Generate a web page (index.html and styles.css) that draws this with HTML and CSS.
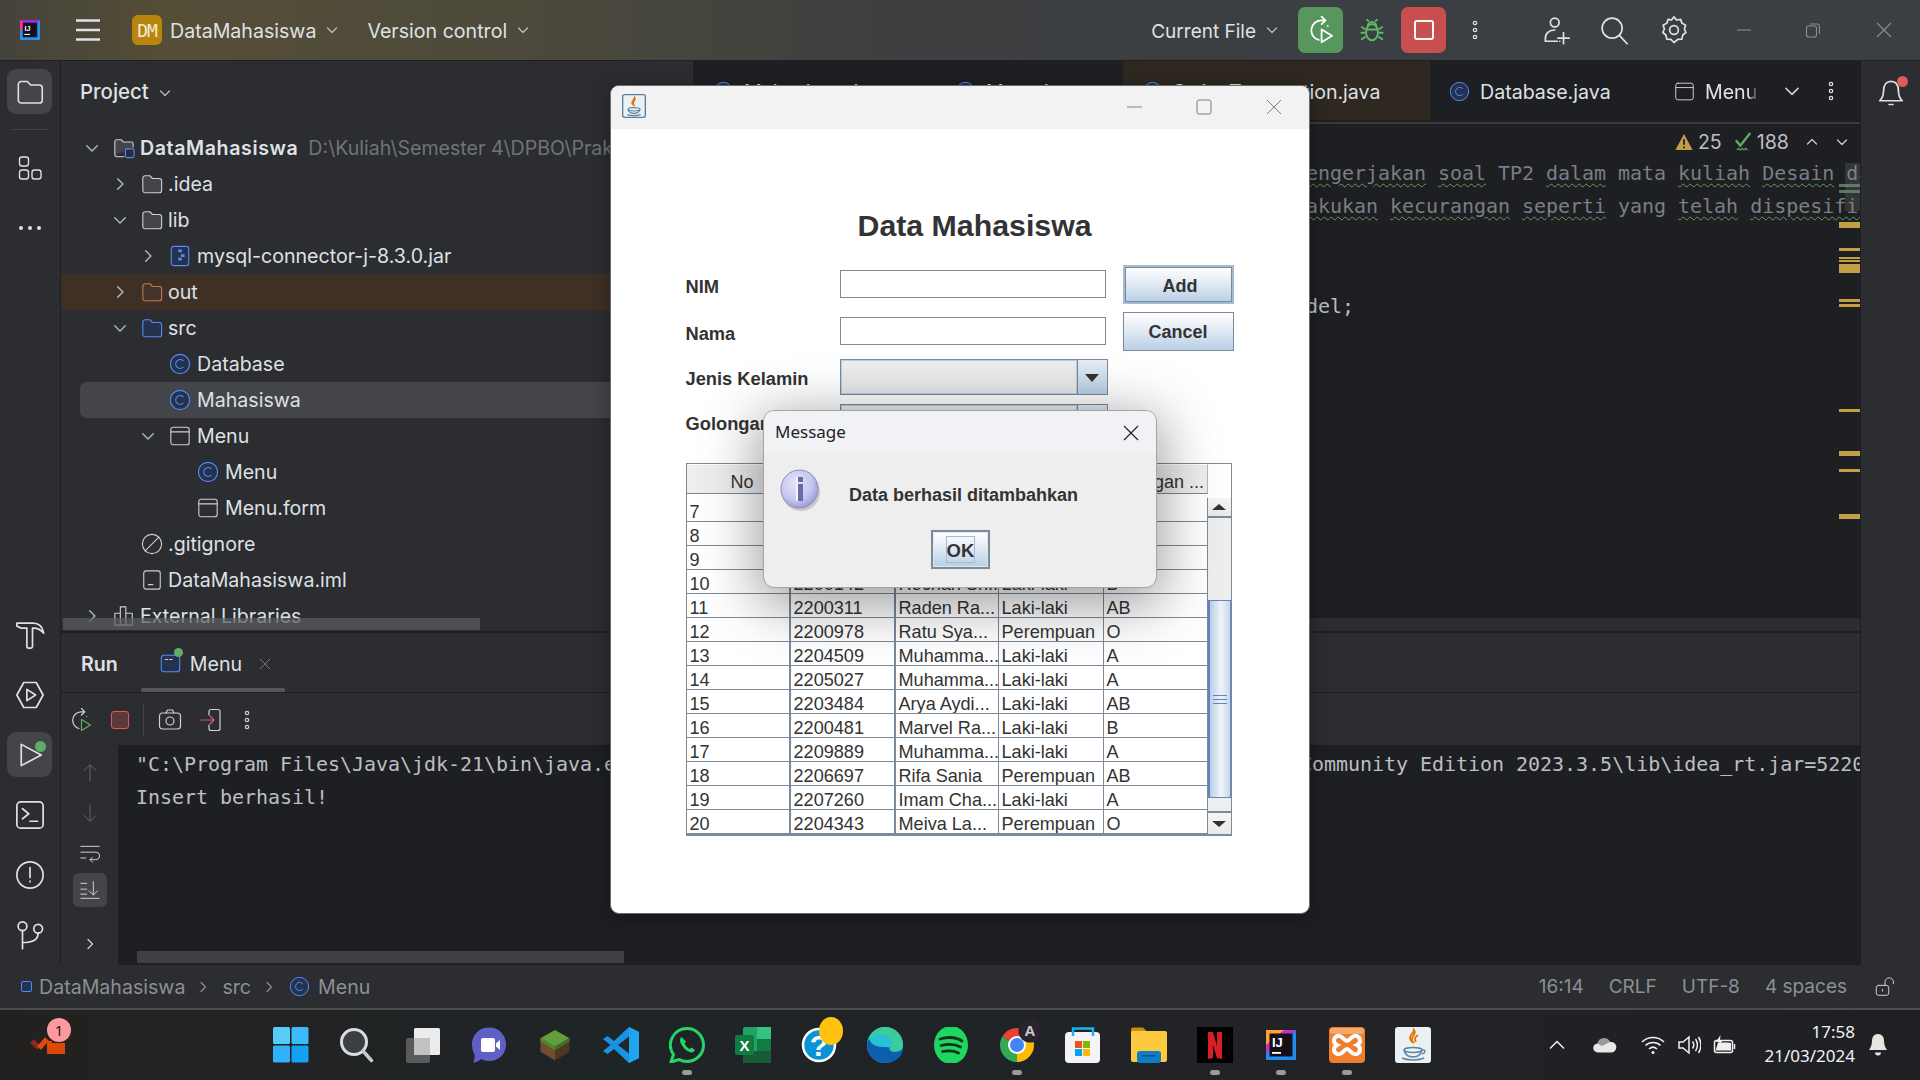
FILE: index.html
```html
<!DOCTYPE html>
<html lang="en">
<head>
<meta charset="utf-8">
<title>DataMahasiswa</title>
<link rel="stylesheet" href="styles.css">
</head>
<body>
<svg class="defs" aria-hidden="true">
  <symbol id="folder" viewBox="0 0 24 24"><path d="M2 5.5A2.5 2.5 0 0 1 4.500 3h5.200l2.800 3H20a2.500 2.500 0 0 1 2.500 2.500V19a2.500 2.500 0 0 1-2.500 2.500H4.500A2.500 2.500 0 0 1 2 19z"/></symbol>
  <symbol id="cls" viewBox="0 0 24 24"><circle cx="12" cy="12" r="10.500"/><path class="thin" d="M15.500 8.500a4.800 4.800 0 1 0 0 7"/></symbol>
  <symbol id="form" viewBox="0 0 24 24"><rect x="2" y="2.500" width="20" height="19" rx="2.500"/><path d="M2 7.500h20"/></symbol>
  <symbol id="chev-r" viewBox="0 0 12 12"><path d="M4 1.500 8.500 6 4 10.500"/></symbol>
  <symbol id="chev-d" viewBox="0 0 12 12"><path d="M1.500 4 6 8.500 10.500 4"/></symbol>
  <symbol id="chev-u" viewBox="0 0 12 12"><path d="M1.500 8 6 3.500 10.500 8"/></symbol>
  <symbol id="dots-v" viewBox="0 0 24 24"><circle class="solid" cx="12" cy="5" r="1.700"/><circle class="solid" cx="12" cy="12" r="1.700"/><circle class="solid" cx="12" cy="19" r="1.700"/></symbol>
  <symbol id="rerun" viewBox="0 0 24 24"><path d="M10 20.500A8.500 8.500 0 0 1 12 3.800h3M12.500 .5 15.800 3.800 12.500 7M17.800 8.500v0"/><path class="play" d="M12.500 11.500 21.500 17 12.500 22.500z"/></symbol>
  <symbol id="x" viewBox="0 0 16 16"><path d="M1.500 1.500 14.500 14.500M14.500 1.500 1.500 14.500"/></symbol>
</svg>

<div class="page">
  <header class="titlebar">
    <div class="tb-left">
      <svg class="logo-s" viewBox="0 0 36 36"><rect width="36" height="36" fill="#2b8ff2"/><path d="M0 0h36L18 18z" fill="#a12cd6"/><path d="M0 0v20L12 12z" fill="#ff318c"/><rect x="5" y="5" width="26" height="26" fill="#14101a"/><text x="8" y="20" class="ij">IJ</text><rect x="8" y="25" width="10" height="2" fill="#fff"/></svg>
      <svg class="burger" viewBox="0 0 24 22"><path d="M0 1.500h24M0 11h24M0 20.500h24"/></svg>
      <span class="badge-dm">DM</span>
      <span class="t-name">DataMahasiswa</span>
      <svg class="ic ch12 m-ch"><use href="#chev-d"/></svg>
      <span class="t-vc">Version control</span>
      <svg class="ic ch12 m-ch"><use href="#chev-d"/></svg>
    </div>
    <div class="tb-right">
      <span class="t-cur">Current File</span>
      <svg class="ic ch12 m-ch2"><use href="#chev-d"/></svg>
      <span class="run-btn green"><svg class="ic s28 w"><use href="#rerun"/></svg></span>
      <svg class="bug" viewBox="0 0 24 24"><ellipse cx="12" cy="14" rx="5.500" ry="7.500"/><path d="M8 8.500a4 4 0 0 1 8 0M9 4 7 2M15 4l2-2M2 9l4 2.500M22 9l-4 2.500M1.500 14.500H6M22.500 14.500H18M2 21l4-3M22 21l-4-3M6.500 11.500h11"/></svg>
      <span class="run-btn red"><span class="stop-in"></span></span>
      <svg class="ic s24 m-dots"><use href="#dots-v"/></svg>
      <svg class="ic s30 m-user" viewBox="0 0 24 24"><circle cx="11" cy="6" r="3.500"/><path d="M3.500 21v-2.500C3.500 14.500 7 12 11 12M15 21h0M3.500 21H13M18 14v9M13.500 18.500h9"/></svg>
      <svg class="ic s30 m-srch" viewBox="0 0 24 24"><circle cx="10.500" cy="10.500" r="8"/><path d="m16.500 16.500 6 6.500"/></svg>
      <svg class="ic s30 m-gear" viewBox="0 0 24 24"><path d="M12 1.500 14 4l3.300-.5 1 3 3 1.700-1 3L21.500 14l-2.500 2-.7 3.300-3.300.2L12 22l-2.500-2.500-3.300-.2-.7-3.300L3 14l1.300-2.800-1-3 3-1.700 1-3L10 4z"/><circle cx="12" cy="12" r="3.500"/></svg>
      <svg class="wc dim m-min" viewBox="0 0 16 16"><path d="M1 8h14"/></svg>
      <svg class="wc dim m-res" viewBox="0 0 16 16"><rect x="1.500" y="4" width="10" height="11" rx="2"/><path d="M5 2h7a2.500 2.500 0 0 1 2.500 2.500V12"/></svg>
      <svg class="wc dim m-cls" viewBox="0 0 16 16"><path d="M1 1l14 14M15 1 1 15"/></svg>
    </div>
  </header>

  <div class="workspace">
    <nav class="strip-left">
      <div class="strip-group">
        <span class="tool active"><svg class="ic s28"><use href="#folder"/></svg></span>
        <span class="strip-sep"></span>
        <span class="tool"><svg class="ic s26" viewBox="0 0 24 24"><rect x="1.500" y="1" width="9" height="9" rx="2.500"/><rect x="1.500" y="14" width="9" height="9" rx="2.500"/><rect x="14" y="14" width="9" height="9" rx="2.500"/></svg></span>
        <span class="tool"><svg class="ic s26" viewBox="0 0 24 24"><circle class="solid" cx="3" cy="12" r="2"/><circle class="solid" cx="12" cy="12" r="2"/><circle class="solid" cx="21" cy="12" r="2"/></svg></span>
      </div>
      <div class="strip-group">
        <span class="tool"><svg class="ic s30" viewBox="0 0 24 24"><path d="M1.500 2.500h13c4.500 0 7.500 3 8.500 8-2.500-2.800-5-4-8-4H14v14.500a1.500 1.500 0 0 1-1.500 1.500h-1.500A1.500 1.500 0 0 1 9.500 21V6.500H5L1.500 5z"/></svg></span>
        <span class="tool"><svg class="ic s30" viewBox="0 0 24 24"><path d="M7 2h10l5.500 10L17 22H7L1.500 12z"/><path d="M9.500 7.500 16.500 12l-7 4.500z"/></svg></span>
        <span class="tool active"><svg class="ic s30" viewBox="0 0 24 24"><path d="M5 3.500 21 12 5 20.500z"/></svg><i class="dot-green big"></i></span>
        <span class="tool"><svg class="ic s30" viewBox="0 0 24 24"><rect x="1.500" y="1.500" width="21" height="21" rx="3"/><path d="M6 7l5 4-5 4M12 17h6"/></svg></span>
        <span class="tool"><svg class="ic s30" viewBox="0 0 24 24"><circle cx="12" cy="12" r="10.500"/><path d="M12 6v8M12 16.800v.5"/></svg></span>
        <span class="tool"><svg class="ic s30" viewBox="0 0 24 24"><circle cx="6" cy="5" r="3.500"/><circle cx="18.500" cy="7" r="3.500"/><path d="M6 8.500V23M6 18c7 0 12.500-2 12.500-7.500"/></svg></span>
      </div>
    </nav>

    <div class="center">
      <div class="top-area">
        <aside class="project">
          <div class="project-head"><span class="project-title">Project</span><svg class="ic ch12 m-ch3"><use href="#chev-d"/></svg></div>
          <div class="tree">
            <div class="row l0"><svg class="ic chev"><use href="#chev-d"/></svg><span class="node"><svg class="ic nd gray" viewBox="0 0 24 24"><path d="M2 20V5a2 2 0 0 1 2-2h5l2.500 2.500H20a2 2 0 0 1 2 2V11M12 21.500H4a2 2 0 0 1-2-1.500"/><rect class="blue-s" x="13.500" y="13" width="9.500" height="9.500" rx="2"/></svg></span><b class="label root">DataMahasiswa</b><span class="path">D:\Kuliah\Semester 4\DPBO\Praktikum\TP2\TP2DPBO2024C2\DataMahasiswa</span></div>
            <div class="row l1"><svg class="ic chev"><use href="#chev-r"/></svg><span class="node"><svg class="ic nd gray"><use href="#folder"/></svg></span><span class="label">.idea</span></div>
            <div class="row l1"><svg class="ic chev"><use href="#chev-d"/></svg><span class="node"><svg class="ic nd gray"><use href="#folder"/></svg></span><span class="label">lib</span></div>
            <div class="row l2"><svg class="ic chev"><use href="#chev-r"/></svg><span class="node"><svg class="ic nd jar" viewBox="0 0 24 24"><rect x="2.500" y="1.500" width="19" height="21" rx="2.500"/><path class="pix" d="M10 5h4v3h-4zM13 10h4v3h-4zM10 14h4v3h-4z"/></svg></span><span class="label">mysql-connector-j-8.3.0.jar</span></div>
            <div class="row l1 excluded"><svg class="ic chev"><use href="#chev-r"/></svg><span class="node"><svg class="ic nd orange"><use href="#folder"/></svg></span><span class="label">out</span></div>
            <div class="row l1"><svg class="ic chev"><use href="#chev-d"/></svg><span class="node"><svg class="ic nd blue"><use href="#folder"/></svg></span><span class="label">src</span></div>
            <div class="row l2"><span class="chev"></span><span class="node"><svg class="ic nd cl"><use href="#cls"/></svg></span><span class="label">Database</span></div>
            <div class="row l2 selected"><span class="chev"></span><span class="node"><svg class="ic nd cl"><use href="#cls"/></svg></span><span class="label">Mahasiswa</span></div>
            <div class="row l2"><svg class="ic chev"><use href="#chev-d"/></svg><span class="node"><svg class="ic nd gray0"><use href="#form"/></svg></span><span class="label">Menu</span></div>
            <div class="row l3"><span class="chev"></span><span class="node"><svg class="ic nd cl"><use href="#cls"/></svg></span><span class="label">Menu</span></div>
            <div class="row l3"><span class="chev"></span><span class="node"><svg class="ic nd gray0"><use href="#form"/></svg></span><span class="label">Menu.form</span></div>
            <div class="row l1"><span class="chev"></span><span class="node"><svg class="ic nd gray0" viewBox="0 0 24 24"><circle cx="12" cy="12" r="10.500"/><path d="M19.500 4.500 4.500 19.500"/></svg></span><span class="label">.gitignore</span></div>
            <div class="row l1"><span class="chev"></span><span class="node"><svg class="ic nd gray0" viewBox="0 0 24 24"><rect x="3" y="2" width="18" height="20" rx="2.500"/><path d="M8 17h5"/></svg></span><span class="label">DataMahasiswa.iml</span></div>
            <div class="row l0"><svg class="ic chev"><use href="#chev-r"/></svg><span class="node"><svg class="ic nd gray0" viewBox="0 0 24 24"><path d="M2 22V9h6v13M8 22V2h6v20M14 22V9h7v13M2 22h19"/></svg></span><span class="label">External Libraries</span></div>
          </div>
          <div class="tree-scroll"></div>
        </aside>

        <section class="editor">
          <div class="tabs">
            <div class="tab-list">
              <span class="tab t-a"><svg class="ic tb-ic cl"><use href="#cls"/></svg>Mahasiswa.java</span>
              <span class="tab t-b"><svg class="ic tb-ic cl"><use href="#cls"/></svg>Menu.java</span>
              <span class="tab t-c tinted"><svg class="ic tb-ic cl"><use href="#cls"/></svg>SwingTransaction.java</span>
              <span class="tab t-d"><svg class="ic tb-ic cl"><use href="#cls"/></svg>Database.java</span>
              <span class="tab last"><svg class="ic tb-ic gray0"><use href="#form"/></svg><span class="fade">Menu.form</span></span>
            </div>
            <svg class="ic ch16 m-t1"><use href="#chev-d"/></svg>
            <svg class="ic s24 m-t2"><use href="#dots-v"/></svg>
          </div>
          <div class="ed-body">
            <div class="insp">
              <svg class="warn" viewBox="0 0 20 20"><path d="M10 1 19.500 19H.5z"/><path class="bang" d="M10 7v6M10 15v2"/></svg>
              <span class="insp-n">25</span>
              <svg class="tick" viewBox="0 0 20 24"><path d="M2 10l5 6L18 2" /><path class="wavy" d="M3 21l2-2 2 2 2-2 2 2 2-2 2 2"/></svg>
              <span class="insp-n">188</span>
              <svg class="ic ch12 m-u"><use href="#chev-u"/></svg>
              <svg class="ic ch12 m-d"><use href="#chev-d"/></svg>
            </div>
            <div class="code c1"><span class="sq">mengerjakan</span> <span class="sq">soal</span> TP2 <span class="sq">dalam</span> mata <span class="sq">kuliah</span> <span class="sq">Desain</span> <span class="sq">dan Pemrograman</span></div>
            <div class="code c2"><span class="sq">melakukan</span> <span class="sq">kecurangan</span> <span class="sq">seperti</span> yang <span class="sq">telah</span> <span class="sq">dispesifikasikan</span></div>
            <div class="code"></div>
            <div class="code"></div>
            <div class="code c3">import javax.swing.table.DefaultTableModel;</div>
            <div class="marks">
              <i class="mk gry" style="top:60px;height:3px"></i><i class="mk gry" style="top:66px;height:3px"></i>
              <i class="mk" style="top:98px;height:6px"></i><i class="mk" style="top:124px;height:3px"></i>
              <i class="mk" style="top:133px;height:2px"></i><i class="mk" style="top:136px;height:2px"></i>
              <i class="mk" style="top:140px;height:9px"></i><i class="mk" style="top:175px;height:3px"></i>
              <i class="mk" style="top:180px;height:3px"></i><i class="mk" style="top:285px;height:3px"></i>
              <i class="mk" style="top:327px;height:5px"></i><i class="mk" style="top:345px;height:3px"></i>
              <i class="mk" style="top:390px;height:5px"></i>
            </div>
            <div class="map-thumb"></div>
          </div>
          <div class="ed-track"></div>
        </section>
      </div>

      <section class="run">
        <div class="run-head">
          <span class="run-title">Run</span>
          <span class="run-tab"><span class="run-ic"><svg class="ic mini" viewBox="0 0 24 24"><rect x="1.500" y="2.500" width="21" height="19" rx="3"/><path class="mini-d" d="M6 7.500h3M11 7.500h3"/></svg><i class="dot-green"></i></span><span>Menu</span><svg class="ic x-mini"><use href="#x"/></svg></span>
        </div>
        <div class="run-tools">
          <svg class="ic s24 greyplay"><use href="#rerun"/></svg>
          <span class="sq-stop"></span>
          <span class="tool-sep"></span>
          <svg class="ic s24" viewBox="0 0 24 24"><rect x="1.500" y="5" width="21" height="16" rx="3"/><circle cx="12" cy="13" r="4"/><path d="M8 5l1.500-3h5L16 5"/></svg>
          <svg class="ic s24" viewBox="0 0 24 24"><path d="M9 7V3.500a2 2 0 0 1 2-2h7a2 2 0 0 1 2 2v17a2 2 0 0 1-2 2h-7a2 2 0 0 1-2-2V17"/><path class="red-s" d="M1 12h13M10 8l4 4-4 4"/></svg>
          <svg class="ic s24"><use href="#dots-v"/></svg>
        </div>
        <div class="run-main">
          <div class="gutter">
            <svg class="ic g-ic dimmer" viewBox="0 0 24 24"><path d="M12 22V2M5 9l7-7 7 7"/></svg>
            <svg class="ic g-ic dimmer" viewBox="0 0 24 24"><path d="M12 2v20M5 15l7 7 7-7"/></svg>
            <svg class="ic g-ic" viewBox="0 0 24 24"><path d="M1 4h22M1 11h18a3.500 3.500 0 0 1 0 9h-7M15 17l-3 3 3 3M1 18h6"/></svg>
            <span class="g-on"><svg class="ic g-ic" viewBox="0 0 24 24"><path d="M1 4h7M1 11h7M1 17h7M1 22h22M16 2v16M11 13l5 5 5-5"/></svg></span>
            <svg class="ic ch12 g-ch"><use href="#chev-r"/></svg>
          </div>
          <div class="console">
            <div class="con-line">"C:\Program Files\Java\jdk-21\bin\java.exe" "-javaagent:C:\Program Files\JetBrains\IntelliJ IDEA Community Edition 2023.3.5\lib\idea_rt.jar=52200:C:\Program Files</div>
            <div class="con-line">Insert berhasil!</div>
            <div class="con-scroll"></div>
          </div>
        </div>
      </section>
    </div>

    <nav class="strip-right">
      <span class="bell-wrap"><svg class="ic s30" viewBox="0 0 24 24"><path d="M3 19c1.500-1.500 3-3 3-7.500C6 6 8.500 3.500 12 3.500s6 2.500 6 8c0 4.500 1.500 6 3 7.500zM10.500 22h3"/></svg><i class="bell-dot"></i></span>
    </nav>
  </div>

  <footer class="status">
    <div class="crumbs">
      <span class="mod-sq"></span><span>DataMahasiswa</span>
      <svg class="ic ch12"><use href="#chev-r"/></svg>
      <span>src</span>
      <svg class="ic ch12"><use href="#chev-r"/></svg>
      <svg class="ic tb-ic cl"><use href="#cls"/></svg>
      <span class="crumb-end">Menu</span>
    </div>
    <div class="st-right">
      <span>16:14</span><span>CRLF</span><span>UTF-8</span><span>4 spaces</span>
      <svg class="ic lock" viewBox="0 0 24 24"><rect x="1.500" y="10" width="15" height="12" rx="3"/><path d="M12 10V6a5 5 0 0 1 10 0v2M9 15v2"/></svg>
    </div>
  </footer>

  <div class="taskbar">
    <div class="widget">
      <svg class="w-ic" viewBox="0 0 36 22"><path class="w-check" d="M2 8l7 7"/><path class="w-check2" d="M9 15l8-9"/><rect x="17" y="10" width="18" height="11" fill="#dc4a0a"/><path d="M17 8h5v4h-5z" fill="#dc4a0a"/></svg>
      <span class="w-badge">1</span>
    </div>
    <div class="apps">
      <span class="app"><svg viewBox="0 0 36 36"><rect width="17" height="17" rx="1.500" fill="#56cdf9"/><rect x="18.500" width="17" height="17" rx="1.500" fill="#3bbcf8"/><rect y="18.500" width="17" height="17" rx="1.500" fill="#2fb2f8"/><rect x="18.500" y="18.500" width="17" height="17" rx="1.500" fill="#14a0f5"/></svg></span>
      <span class="app"><svg viewBox="0 0 36 36"><circle cx="15" cy="15" r="12.500" fill="#3b3f43" stroke="#dcdcdc" stroke-width="3"/><path d="M24 24l8.500 9.500" stroke="#c9c9c9" stroke-width="3.500" stroke-linecap="round"/></svg></span>
      <span class="app"><svg viewBox="0 0 36 36"><rect x="1" y="11" width="24" height="25" rx="2" fill="#5a5a5a"/><rect x="9" y="1" width="26" height="27" rx="1.500" fill="#ececec"/><rect x="9" y="11" width="16" height="17" fill="#c2c2c2"/></svg></span>
      <span class="app"><svg viewBox="0 0 36 36"><path d="M18 .5C28 .5 35 8 35 17.500S28 34 18 34c-3 0-6-.8-8-2-2 2-5 3.500-8 3.500 1.500-3 2-5 1.500-8C2 25 1 21 1 17.500 1 8 8 .5 18 .5z" fill="#6060c4"/><rect x="10" y="11" width="14" height="14" rx="2" fill="#fff"/><path d="M25 16.500 29 13v10l-4-3.500z" fill="#fff"/></svg></span>
      <span class="app"><svg viewBox="-3 0 42 36"><path d="M18 .5 35 10 18 20 1 10z" fill="#629f3c"/><path d="M1 10 18 20v16L1 26z" fill="#6d4c30"/><path d="M35 10 18 20v16l17-10z" fill="#4f3622"/><path d="M1 10 18 20v4L1 14z" fill="#4f8a2f"/><path d="M35 10 18 20v4l17-10z" fill="#3f7325"/></svg></span>
      <span class="app"><svg viewBox="0 0 36 36"><path d="M26 0 36 5v26l-10 5-15-14-6.500 5L0 24l7.500-6L0 12l4.500-3 6.500 5z" fill="#1793e4"/><path d="M26 9.500 15 18l11 8.500z" fill="#23262a"/><path d="M26 0 36 5v26l-10 5z" fill="#20a4f0"/></svg></span>
      <span class="app"><svg viewBox="0 0 36 36"><path d="M18 1.500A16.500 16.500 0 0 1 18 34.500c-3 0-5.500-.7-8-2L2 35l2.500-7.500A16.500 16.500 0 0 1 18 1.500z" fill="none" stroke="#25d366" stroke-width="3"/><path d="M12.500 10c-1.500 1-2 3-1 5.500 1.500 4 5 8 9 9.500 2.500 1 4.500 0 5.500-2l-3.500-2.500-2 1.500c-2-1-4-3.500-5-5.500l1.500-2z" fill="#25d366"/></svg></span>
      <span class="app"><svg viewBox="0 0 36 36"><rect x="8" y="0" width="28" height="36" rx="2" fill="#21a366"/><rect x="22" y="0" width="14" height="12" fill="#33c481"/><rect x="22" y="12" width="14" height="12" fill="#107c41"/><rect x="8" y="24" width="28" height="12" fill="#185c37"/><rect y="8" width="19" height="20" rx="2" fill="#107c41"/><text x="9.500" y="24" class="sv-x">X</text></svg></span>
      <span class="app"><svg class="ovf" viewBox="0 0 36 36"><circle cx="18" cy="18" r="16" fill="#0a94d6" stroke="#fff" stroke-width="2.500"/><text x="18" y="29" class="sv-q">?</text><ellipse cx="30" cy="4" rx="12" ry="14" fill="#ffc20e"/></svg></span>
      <span class="app"><svg viewBox="0 0 36 36"><circle cx="18" cy="18" r="18" fill="#28c0d6"/><path d="M36 20c0 10-8 16-18 16C8 36 0 28 0 18c0-3 1-6 2-8 0 6 6 10 14 10 7 0 12 2 15 4 3 0 5-2 5-4z" fill="#0c5fb0"/><path d="M18 0c10 0 18 8 18 18 0 4-4 7-8 7-3 0-5-1-6-3 2-1 3-3 3-5 0-5-5-10-11-10-6 0-11 3-14 8C3 6 10 0 18 0z" fill="#3ccc9c"/></svg></span>
      <span class="app"><svg viewBox="0 0 36 36"><ellipse cx="18" cy="18" rx="17" ry="19" fill="#1ed760"/><path d="M7 12c7-2 16-2 22 2M8 18.500c6-1.500 14-1.500 19.500 1.500M9.500 24.500c5-1 11.500-1 16 1.500" fill="none" stroke="#15301f" stroke-width="2.800" stroke-linecap="round"/></svg></span>
      <span class="app"><svg class="ovf" viewBox="0 0 36 36"><path d="M18 18 3.300 9.500A17 17 0 0 1 32.700 9.500z" fill="#ea4335"/><path d="M18 18 32.700 9.500A17 17 0 0 1 18 35z" fill="#fbbc04"/><path d="M18 18 18 35A17 17 0 0 1 3.300 9.500z" fill="#34a853"/><circle cx="18" cy="18" r="9" fill="#fff"/><circle cx="18" cy="18" r="7" fill="#4285f4"/><circle cx="31" cy="4" r="11.500" fill="#2a2330"/><text x="31" y="9" class="sv-a">A</text></svg></span>
      <span class="app"><svg viewBox="0 0 36 36"><rect y="5" width="35" height="31" rx="4" fill="#f4f4f4"/><path d="M8 9V1.500h20V9" fill="none" stroke="#1ab2f5" stroke-width="2.500"/><rect x="10" y="14" width="7" height="7" fill="#f25022"/><rect x="18" y="14" width="7" height="7" fill="#7fba00"/><rect x="10" y="22" width="7" height="7" fill="#00a4ef"/><rect x="18" y="22" width="7" height="7" fill="#ffb900"/></svg></span>
      <span class="app"><svg viewBox="0 0 36 36"><path d="M0 2.500A2 2 0 0 1 2 .5h10l5 5h-17z" fill="#c8900f"/><rect y="4" width="36" height="31" rx="2" fill="#fdc93e"/><rect x="6" y="24" width="24" height="12" rx="3" fill="#0f7dc6"/><rect x="11" y="28" width="14" height="1.500" fill="#0b4f80"/></svg></span>
      <span class="app"><svg viewBox="0 0 36 36"><rect width="36" height="36" fill="#000"/><path d="M11 5h5l4 14V5h5v27l-5-1-4-13v13l-5 1z" fill="#d81f26"/></svg></span>
      <span class="app"><svg viewBox="0 0 36 36"><rect x="3" y="3" width="30" height="30" fill="#1f8cf0"/><path d="M3 3h30L18 18 3 26z" fill="#c232c8"/><path d="M3 3h18L3 18z" fill="#ffa234"/><rect x="6.500" y="6.500" width="23" height="23" fill="#14101a"/><text x="9" y="20" class="ij">IJ</text><rect x="9" y="25" width="9" height="1.800" fill="#fff"/></svg></span>
      <span class="app"><svg viewBox="0 0 36 36"><rect width="36" height="36" rx="4" fill="#ee7f2c"/><rect x="1" y="1" width="34" height="6" rx="3" fill="#f7a869"/><path d="M8 9c5-2 7 5 10 5s5-7 10-5c4 2 4 7 0 9 4 2 4 7 0 9-5 2-7-5-10-5s-5 7-10 5c-4-2-4-7 0-9-4-2-4-7 0-9z" fill="none" stroke="#fff" stroke-width="4"/></svg></span>
      <span class="app"><svg viewBox="0 0 36 36"><rect width="36" height="36" rx="3" fill="#eaf0f4"/><path d="M19 3c3 4-3 6-2 10 .4 2 2 3 2 3-4-2-5-5-3-8 1-2 3-3 3-5zM23 8c-3 2-4 4-2 7" fill="none" stroke="#e76f00" stroke-width="1.800"/><ellipse cx="18" cy="23" rx="9" ry="2.500" fill="none" stroke="#5f84a0" stroke-width="1.500"/><path d="M9 23c1 4 4 7 9 7s8-3 9-7M7 31c5 2.500 17 2.500 22 0" fill="none" stroke="#5f84a0" stroke-width="1.500"/><path d="M27 23c4-1 4 3 0 4" fill="none" stroke="#5f84a0" stroke-width="1.300"/></svg></span>
    </div>
    <div class="tray">
      <svg class="t-ic caret" viewBox="0 0 16 10"><path d="M1 8.500 8 1.500l7 7"/></svg>
      <svg class="t-cloud" viewBox="0 0 26 16"><path d="M6 15.500a4.500 4.500 0 0 1-.5-9A7 7 0 0 1 18 5a5.300 5.300 0 0 1 2 10.500z" fill="#e8e8e8"/><path d="M12 1a6.500 6.500 0 0 1 6 4l-8 4-4.500-2.500A7 7 0 0 1 12 1z" fill="#9a9a9a"/></svg>
      <span class="spc"></span>
      <svg class="t-ic t36" viewBox="0 0 24 20"><path d="M1 7C7 1 17 1 23 7M4.500 10.500c4-4 11-4 15 0M8 14c2.500-2.300 5.500-2.300 8 0"/><circle class="solid-w" cx="12" cy="17.500" r="1.500"/></svg>
      <svg class="t-ic t36" viewBox="0 0 24 20"><path d="M2 7v6h4l6 5V2L6 7zM15.500 6.500c1.500 2 1.500 5 0 7M18.500 4c2.500 3.500 2.500 8.500 0 12M21.500 2c3 5 3 11 0 16"/></svg>
      <svg class="t-ic t36" viewBox="0 0 24 20"><rect x="1.500" y="5.500" width="18" height="12" rx="2"/><path class="b-f" d="M5 7.500h10l3 .5v7.500H2.500z"/><path d="M21.500 9v5"/><path class="b-f" d="M7.500 0 3 7h3.500L4.500 12 10 5H7z"/></svg>
      <div class="clock"><span>17:58</span><span>21/03/2024</span></div>
      <span class="t-bell"><svg viewBox="0 0 20 24"><path d="M10 1c-4 0-6 3-6 7 0 4-1.500 7-3 9h18c-1.500-2-3-5-3-9 0-4-2-7-6-7zM7 19.500h6a3 3 0 0 1-6 0z" fill="#e6e6e1"/></svg></span>
    </div>
  </div>

  <!-- Java application window -->
  <div class="jframe">
    <div class="jtitle">
      <svg class="jicon" viewBox="0 0 36 36"><rect x="1" y="1" width="34" height="34" rx="3" fill="#eaf0f4" stroke="#5a7f9f" stroke-width="2"/><path d="M19 5c3 4-3 6-2 10 .4 2 2 3 2 3-4-2-5-5-3-8 1-2 3-3 3-5z" fill="none" stroke="#e76f00" stroke-width="2"/><ellipse cx="18" cy="23" rx="9" ry="2.500" fill="none" stroke="#5f84a0" stroke-width="1.800"/><path d="M9 23c1 4 4 6 9 6s8-2 9-6M8 31c5 2 15 2 20 0" fill="none" stroke="#5f84a0" stroke-width="1.800"/></svg>
      <svg class="j-wc j-min" viewBox="0 0 16 16"><path d="M0 8h16"/></svg>
      <svg class="j-wc j-max" viewBox="0 0 16 16"><rect x="1" y="1" width="14" height="14" rx="2"/></svg>
      <svg class="j-wc j-cls" viewBox="0 0 16 16"><path d="M1 1l14 14M15 1 1 15"/></svg>
    </div>
    <div class="jbody">
      <h1 class="jhead">Data Mahasiswa</h1>
      <div class="jform">
        <label class="jlabel">NIM</label><span class="jinput"></span><button class="jbtn focus">Add</button>
        <label class="jlabel">Nama</label><span class="jinput"></span><button class="jbtn">Cancel</button>
        <label class="jlabel">Jenis Kelamin</label><span class="jcombo"><span class="jc-in"></span><span class="jc-arrow"></span></span><span></span>
        <label class="jlabel">Golongan Darah</label><span class="jcombo"><span class="jc-in"></span><span class="jc-arrow"></span></span><span></span>
      </div>
      <div class="jtable">
        <div class="jtable-main">
          <div class="jhdr"><span>No</span><span>NIM</span><span>Nama</span><span>Jenis Kelamin</span><span>Golongan ...</span></div>
          <table class="jgrid">
            <colgroup><col class="c-1"><col class="c-2"><col class="c-3"><col class="c-4"><col class="c-5"></colgroup>
            <tbody>
              <tr><td>7</td><td>2202046</td><td>Muhamma...</td><td>Laki-laki</td><td>A</td></tr>
              <tr><td>8</td><td>2201440</td><td>Fadhil Mu...</td><td>Laki-laki</td><td>B</td></tr>
              <tr><td>9</td><td>2203903</td><td>Hanif Ahm...</td><td>Laki-laki</td><td>O</td></tr>
              <tr><td>10</td><td>2200142</td><td>Rochan Sh...</td><td>Laki-laki</td><td>B</td></tr>
              <tr><td>11</td><td>2200311</td><td>Raden Ra...</td><td>Laki-laki</td><td>AB</td></tr>
              <tr><td>12</td><td>2200978</td><td>Ratu Sya...</td><td>Perempuan</td><td>O</td></tr>
              <tr><td>13</td><td>2204509</td><td>Muhamma...</td><td>Laki-laki</td><td>A</td></tr>
              <tr><td>14</td><td>2205027</td><td>Muhamma...</td><td>Laki-laki</td><td>A</td></tr>
              <tr><td>15</td><td>2203484</td><td>Arya Aydi...</td><td>Laki-laki</td><td>AB</td></tr>
              <tr><td>16</td><td>2200481</td><td>Marvel Ra...</td><td>Laki-laki</td><td>B</td></tr>
              <tr><td>17</td><td>2209889</td><td>Muhamma...</td><td>Laki-laki</td><td>A</td></tr>
              <tr><td>18</td><td>2206697</td><td>Rifa Sania</td><td>Perempuan</td><td>AB</td></tr>
              <tr><td>19</td><td>2207260</td><td>Imam Cha...</td><td>Laki-laki</td><td>A</td></tr>
              <tr><td>20</td><td>2204343</td><td>Meiva La...</td><td>Perempuan</td><td>O</td></tr>
            </tbody>
          </table>
        </div>
        <div class="jsb">
          <span class="jsb-btn up"><i class="tri-up"></i></span>
          <span class="jsb-gap"></span>
          <span class="jsb-thumb"><i></i></span>
          <span class="jsb-rest"></span>
          <span class="jsb-btn down"><i class="tri-down"></i></span>
        </div>
      </div>
    </div>
  </div>

  <!-- Message dialog -->
  <div class="msg">
    <div class="msg-title"><span>Message</span><svg class="msg-x" viewBox="0 0 16 16"><path d="M1 1l14 14M15 1 1 15"/></svg></div>
    <div class="msg-body">
      <div class="msg-row">
        <svg class="msg-ic" viewBox="0 0 40 44"><defs><radialGradient id="ig" cx="40%" cy="35%" r="75%"><stop offset="0" stop-color="#e6e6fb"/><stop offset=".6" stop-color="#c4c4f0"/><stop offset="1" stop-color="#8d8dc8"/></radialGradient></defs><ellipse cx="21" cy="23" rx="19" ry="19" fill="#9a9a9a" opacity=".45"/><ellipse cx="19.500" cy="20" rx="18.500" ry="19" fill="url(#ig)" stroke="#8c8cc0"/><rect x="16" y="8" width="7" height="5" fill="#f4f4ff"/><rect x="16" y="15" width="7" height="17" fill="#f4f4ff"/><rect x="18" y="15" width="5" height="17" fill="#6a6aa6"/><rect x="18" y="8" width="5" height="5" fill="#6a6aa6"/></svg>
        <span class="msg-text">Data berhasil ditambahkan</span>
      </div>
      <button class="msg-ok"><span>OK</span></button>
    </div>
  </div>
</div>
</body>
</html>
```

FILE: styles.css
```css
* { box-sizing: border-box; }
html, body { margin: 0; padding: 0; background: #1e1f22; }
body { font-family: "Inter", "Noto Sans", sans-serif; font-size: 19.6px; color: #dfe1e5; }
.defs { position: absolute; width: 0; height: 0; }

.page { position: relative; width: 1920px; height: 1080px; overflow: hidden; display: flex; flex-direction: column; }

/* icons */
.ic { fill: none; stroke: currentColor; stroke-width: 1.2; stroke-linecap: round; stroke-linejoin: round; color: #ced0d6; flex: none; overflow: visible; }
.ic .solid { fill: currentColor; stroke: none; }
.s24 { width: 24px; height: 24px; }
.s26 { width: 24px; height: 24px; }
.s28 { width: 28px; height: 28px; }
.s30 { width: 30px; height: 30px; }
.ch12 { width: 12px; height: 12px; }
.ch16 { width: 16px; height: 16px; }
.play { stroke: var(--play, currentColor); }
.tool .ic, .tb-right .s30, .strip-right .ic { stroke-width: 1.35; color: #dfe1e5; }

/* title bar */
.titlebar { height: 61px; flex: none; display: flex; justify-content: space-between; align-items: center; border-bottom: 1px solid #1e1f22; background: linear-gradient(90deg, #44433b 0, #554e37 170px, #4d4a3b 500px, #3d3f40 900px, #3b3e42 1300px); }
.tb-left, .tb-right { display: flex; align-items: center; height: 60px; }
.tb-left { padding-left: 20px; }
.logo-s { width: 20px; height: 20px; flex: none; }
.ij { font-family: "Liberation Sans", sans-serif; font-weight: 700; font-size: 13px; fill: #fff; }
.burger { width: 24px; height: 22px; margin-left: 36px; flex: none; fill: none; stroke: #dfe1e5; stroke-width: 2.4; }
.badge-dm { width: 30px; height: 30px; margin-left: 32px; border-radius: 6px; background: #b8860f; color: #f5ecd0; font-family: "DejaVu Sans Mono", monospace; font-size: 18px; display: flex; align-items: center; justify-content: center; letter-spacing: -1px; }
.t-name { margin-left: 8px; padding-top: 2px; }
.m-ch { margin-left: 10px; color: #bcbec4; }
.t-vc { margin-left: 29px; padding-top: 2px; }
.t-cur { margin-right: 10px; padding-top: 2px; font-size: 19px; }
.m-ch2 { color: #bcbec4; margin-right: 20px; }
.run-btn { width: 45px; height: 46px; border-radius: 7px; display: flex; align-items: center; justify-content: center; flex: none; }
.green { background: #57965c; }
.w { color: #fff; stroke-width: 1.5; }
.bug { width: 26px; height: 26px; margin: 0 16px; fill: none; stroke: #5fb865; stroke-width: 1.7; flex: none; }
.red { background: #c94f4f; }
.stop-in { width: 20px; height: 20px; border: 2px solid #fff; border-radius: 3px; }
.m-dots { margin-left: 17px; color: #dfe1e5; }
.m-user { margin-left: 54px; }
.m-srch { margin-left: 28px; }
.m-gear { margin-left: 30px; }
.wc { width: 16px; height: 16px; fill: none; stroke: #8b8e92; stroke-width: 1.1; flex: none; }
.m-min { margin-left: 47px; }
.m-res { margin-left: 53px; }
.m-cls { margin-left: 55px; margin-right: 28px; }

/* workspace */
.workspace { flex: 1; display: flex; min-height: 0; }
.strip-left { width: 61px; flex: none; background: #2b2d30; border-right: 1px solid #1e1f22; display: flex; flex-direction: column; justify-content: space-between; padding: 8px 0 8px 7px; }
.strip-group { display: flex; flex-direction: column; gap: 15px; }
.tool { position: relative; width: 45px; height: 45px; border-radius: 9px; display: flex; align-items: center; justify-content: center; }
.tool.active { background: #43454a; }
.strip-sep { display: block; width: 36px; height: 1px; background: #43454a; margin: 0 0 0 5px; }
.dot-green { position: absolute; width: 9px; height: 9px; border-radius: 50%; background: #5fad65; }
.dot-green.big { width: 11px; height: 11px; top: 9px; right: 6px; }

.center { flex: 1; min-width: 0; display: flex; flex-direction: column; }
.top-area { height: 570px; flex: none; display: flex; }

/* project tree */
.project { width: 632px; flex: none; background: #2b2d30; position: relative; overflow: hidden; }
.project-head { height: 69px; padding: 19px 0 0 19px; display: flex; align-items: flex-start; }
.project-title { font-weight: 500; font-size: 20.4px; line-height: 24px; }
.m-ch3 { margin: 7px 0 0 10px; color: #bcbec4; }
.tree { display: flex; flex-direction: column; }
.row { height: 36px; flex: none; display: flex; align-items: center; white-space: nowrap; }
.l0 { padding-left: 21px; }
.l1 { padding-left: 49px; }
.l2 { padding-left: 77px; }
.l3 { padding-left: 105px; }
.chev { width: 20px; height: 14px; flex: none; color: #b4b8bf; }
.node { margin-left: 11px; width: 21px; height: 24px; margin-right: 7px; display: flex; align-items: center; justify-content: center; flex: none; }
.l0 .node, .l1 .node { margin-right: 6px; }
.nd { width: 22px; height: 22px; stroke-width: 1.2; }
.gray { color: #ced0d6; fill: #43454a; }
.gray0 { color: #ced0d6; }
.orange { color: #c8754f; fill: #45322b; }
.blue { color: #548af7; fill: #25324d; }
.cl { color: #548af7; fill: #25324d; }
.cl .thin { fill: none; }
.jar { color: #548af7; fill: #25324d; }
.pix { fill: #548af7; stroke: none; }
.blue-s { stroke: #548af7; fill: #2b2d30; }
.label { color: #dfe1e5; }
.root { font-weight: 600; letter-spacing: .6px; }
.path { color: #6f737a; margin-left: 10px; }
.excluded { background: #3f3025; }
.selected { background: #43454a; border-radius: 7px 0 0 7px; margin-left: 19px; padding-left: 58px; }
.tree-scroll { position: absolute; left: 2px; top: 557px; width: 417px; height: 12px; background: rgba(92, 93, 97, .72); }

/* editor */
.editor { flex: 1; min-width: 0; background: #1e1f22; display: flex; flex-direction: column; }
.tabs { height: 63px; flex: none; display: flex; align-items: center; border-bottom: 2px solid #393b40; padding-bottom: 2px; }
.tab-list { width: 1072px; height: 100%; display: flex; align-items: center; overflow: hidden; }
.tab { flex: none; height: 100%; padding: 2px 0 0 20px; display: flex; align-items: center; white-space: nowrap; color: #dfe1e5; }
.t-a { width: 242px; }
.t-b { width: 188px; }
.t-c { width: 307px; padding-left: 19px; }
.t-d { width: 225px; padding-left: 19px; }
.tab.tinted { background: #2e2821; }
.tab.last { padding-left: 19px; }
.tb-ic { width: 21px; height: 21px; margin-right: 10px; stroke-width: 1.1; }
.fade { width: 54px; overflow: hidden; -webkit-mask-image: linear-gradient(90deg, #000 80%, transparent); mask-image: linear-gradient(90deg, #000 80%, transparent); }
.m-t1 { margin-left: 19px; }
.m-t2 { margin-left: 19px; color: #dfe1e5; }
.ed-body { flex: 1; position: relative; overflow: hidden; min-height: 0; }
.insp { height: 33px; padding-top: 2px; display: flex; align-items: center; justify-content: flex-end; padding-right: 12px; color: #bcbec4; }
.warn { width: 18px; height: 18px; fill: #c29e4a; stroke: none; flex: none; }
.warn .bang { stroke: #1e1f22; stroke-width: 2; fill: none; }
.insp-n { margin-left: 5px; }
.tick { width: 18px; height: 24px; margin-left: 12px; fill: none; stroke: #5fad65; stroke-width: 2.6; flex: none; }
.tick .wavy { stroke-width: 1.2; }
.m-u { margin-left: 17px; }
.m-d { margin-left: 18px; }
.code { height: 33px; line-height: 33px; font-family: "DejaVu Sans Mono", monospace; font-size: 20px; letter-spacing: -.04px; color: #7a7e85; white-space: nowrap; overflow: hidden; }
.c1 { padding-left: 601px; }
.c2 { padding-left: 577px; }
.c3 { padding-left: 145px; margin-top: 1px; color: #bcbec4; }
.sq { text-decoration: underline wavy #5d9e5d 1px; text-underline-offset: 3px; }
.marks { position: absolute; right: 0; top: 0; width: 21px; height: 100%; }
.mk { position: absolute; left: 0; width: 100%; background: #c29e45; }
.mk.gry { background: #577865; }
.map-thumb { position: absolute; right: 0; top: 39px; width: 15px; height: 48px; background: rgba(130, 130, 130, .22); }
.ed-track { height: 13px; flex: none; background: #2b2d30; }

/* run panel */
.run { flex: 1; display: flex; flex-direction: column; min-height: 0; border-top: 2px solid #1e1f22; background: #2b2d30; }
.run-head { height: 60px; flex: none; display: flex; align-items: stretch; border-bottom: 1px solid #1e1f22; padding-left: 20px; }
.run-title { font-weight: 600; align-self: center; margin-top: 2px; }
.run-tab { position: relative; margin-left: 23px; width: 144px; padding: 2px 0 0 19px; display: flex; align-items: center; }
.run-tab::after { content: ""; position: absolute; left: 0; right: 0; bottom: 0; height: 4px; background: #55575c; border-radius: 2px 2px 0 0; }
.run-ic { position: relative; display: flex; width: 21px; height: 21px; margin-right: 9px; }
.mini { width: 21px; height: 21px; color: #548af7; fill: #25324d; }
.mini-d { stroke: #ced0d6; }
.run-ic .dot-green { top: -5px; right: -2px; }
.x-mini { width: 12px; height: 12px; margin-left: 17px; color: #7c7f85; }
.run-tools { height: 52px; flex: none; display: flex; align-items: center; padding: 2px 0 0 8px; background: #2b2d30; }
.greyplay { --play: #5fad65; }
.sq-stop { width: 18px; height: 18px; margin-left: 18px; border: 1.5px solid #db5c5c; border-radius: 3px; background: #5e3838; flex: none; }
.tool-sep { width: 1px; height: 34px; background: #43454a; margin: 0 14px 0 14px; }
.run-tools .s24 + .s24 { margin-left: 18px; }
.run-tools .s24:last-child { margin-left: 11px; }
.red-s { stroke: #db5c5c; }
.run-main { flex: 1; display: flex; min-height: 0; }
.gutter { width: 57px; flex: none; background: #2b2d30; display: flex; flex-direction: column; align-items: center; padding-top: 18px; }
.g-ic { width: 20px; height: 20px; }
.dimmer { color: #62656b; margin-bottom: 20px; }
.gutter > .g-ic:nth-child(3) { margin-bottom: 10px; }
.g-on { width: 34px; height: 34px; border-radius: 6px; background: #43454a; display: flex; align-items: center; justify-content: center; }
.g-ch { margin-top: 31px; color: #ced0d6; }
.console { flex: 1; min-width: 0; background: #1e1f22; padding: 3px 0 0 18px; position: relative; overflow: hidden; }
.con-line { height: 33px; line-height: 33px; font-family: "DejaVu Sans Mono", monospace; font-size: 20px; letter-spacing: -.04px; color: #bcbec4; white-space: pre; }
.con-scroll { position: absolute; left: 19px; bottom: 2px; width: 487px; height: 12px; background: #3e4043; }

.strip-right { width: 60px; flex: none; background: #2b2d30; border-left: 1px solid #1e1f22; display: flex; justify-content: center; padding-top: 16px; }
.bell-wrap { position: relative; width: 30px; height: 30px; }
.bell-dot { position: absolute; top: -1px; right: -2px; width: 11px; height: 11px; border-radius: 50%; background: #db5c5c; }

/* status bar */
.status { height: 43px; flex: none; background: #2b2d30; display: flex; align-items: center; justify-content: space-between; color: #8c8f94; padding: 0 25px 0 21px; }
.crumbs, .st-right { display: flex; align-items: center; }
.mod-sq { width: 11px; height: 11px; border: 1.5px solid #548af7; border-radius: 2px; background: #25324d; margin-right: 7px; }
.crumbs .ch12 { margin: 0 13px 0 12px; color: #8c8f94; }
.crumbs .tb-ic { margin: 0 8px 0 1px; }
.st-right { gap: 25px; font-size: 19px; }
.lock { width: 20px; height: 20px; margin-left: 3px; }

/* task bar */
.taskbar { height: 72px; flex: none; border-top: 2px solid #4b4d4f; display: flex; background: linear-gradient(90deg, #23211f 0, #1f2427 30%, #212326 60%, #1e2023 100%); }
.widget { position: relative; width: 258px; flex: none; padding: 23px 0 0 30px; }
.w-ic { width: 36px; height: 22px; display: block; fill: none; }
.w-check { stroke: #8e2a1c; stroke-width: 5; }
.w-check2 { stroke: #e04a0c; stroke-width: 5; }
.w-badge { position: absolute; left: 47px; top: 8px; width: 24px; height: 24px; border-radius: 50%; background: #ff99a0; color: #2a1a1a; font-family: "Noto Sans", sans-serif; font-size: 15px; display: flex; align-items: center; justify-content: center; }
.apps { display: flex; }
.app { position: relative; width: 66px; height: 100%; display: flex; align-items: center; justify-content: center; }
.app svg { width: 36px; height: 36px; display: block; }
.ovf { overflow: visible; }
.app:nth-child(7)::after, .app:nth-child(12)::after, .app:nth-child(15)::after, .app:nth-child(16)::after, .app:nth-child(17)::after { content: ""; position: absolute; left: 28px; bottom: 5px; width: 10px; height: 5px; border-radius: 3px; background: #9a9a9a; }
.sv-x { font-family: "Liberation Sans", sans-serif; font-weight: 700; font-size: 15px; fill: #fff; text-anchor: middle; }
.sv-q { font-family: "Liberation Sans", sans-serif; font-weight: 700; font-size: 30px; fill: #fff; text-anchor: middle; }
.sv-a { font-family: "Liberation Sans", sans-serif; font-weight: 700; font-size: 15px; fill: #cfcfcf; text-anchor: middle; }
.tray { margin-left: auto; width: 387px; flex: none; display: flex; align-items: center; padding-right: 19px; }
.t-ic { fill: none; stroke: #f0f0f0; stroke-width: 1.5; flex: none; }
.t-ic .solid-w { fill: #f0f0f0; stroke: none; }
.t-ic .b-f { fill: #f0f0f0; stroke: none; }
.caret { width: 16px; height: 10px; margin: 0 16px; }
.t-cloud { width: 26px; height: 16px; margin: 0 11px; flex: none; }
.spc { width: 6px; flex: none; }
.t36 { width: 24px; height: 20px; margin: 0 6px; }
.clock { width: 112px; flex: none; margin-top: -2px; display: flex; flex-direction: column; align-items: flex-end; font-family: "Noto Sans", sans-serif; font-size: 17px; line-height: 24px; color: #f2f2f2; }
.t-bell { width: 46px; flex: none; display: flex; justify-content: center; }
.t-bell svg { width: 20px; height: 24px; }

/* Java window */
.jframe { position: absolute; left: 610px; top: 85px; width: 700px; height: 829px; background: #fff; border: 1px solid #6a6b6d; border-radius: 9px; overflow: hidden; display: flex; flex-direction: column; box-shadow: 0 4px 20px rgba(0, 0, 0, .35); font-family: "Liberation Sans", Arial, sans-serif; color: #333; }
.jtitle { height: 43px; flex: none; background: #f2f2f2; display: flex; align-items: center; padding-left: 11px; }
.jicon { width: 24px; height: 24px; flex: none; margin-top: -4px; }
.j-wc { width: 16px; height: 16px; fill: none; stroke: #7d7d7d; stroke-width: 1; flex: none; margin-top: -1px; }
.j-min { margin-left: 481px; width: 15px; }
.j-max { margin-left: 54px; }
.j-cls { margin-left: 54px; }
.jbody { flex: 1; padding: 80px 0 0 74.5px; }
.jhead { margin: 0 0 22px 172px; font-size: 30.3px; line-height: 34px; font-weight: 700; color: #333; }
.jform { display: grid; grid-template-columns: 154px 283px 111px; grid-template-rows: 39px 39px 36px 36px; row-gap: 8px; font-size: 18px; }
.jlabel { font-weight: 700; font-size: 18.3px; white-space: nowrap; align-self: center; padding-top: 4px; }
.jinput { width: 266px; height: 28px; margin-top: 5px; align-self: start; background: #fff; border: 1px solid #7a8a99; }
.jbtn { width: 111px; height: 39px; padding: 2px 0 0; border: 1px solid #7a8a99; background: linear-gradient(180deg, #fff 0, #e9f0f7 35%, #b8cfe5 100%); font-family: "Liberation Sans", Arial, sans-serif; font-weight: 700; font-size: 18px; color: #333; }
.jbtn.focus { border: 2px solid #a3bcd3; box-shadow: inset 0 0 0 1px #7a8a99; padding-left: 4px; padding-top: 3px; }
.jcombo { width: 268px; height: 36px; border: 1px solid #7a8a99; display: flex; background: #eee; }
.jc-in { flex: 1; border: 1px solid #b3cde6; background: linear-gradient(180deg, #eee, #e6e6e6); }
.jc-arrow { position: relative; width: 30px; flex: none; border-left: 1px solid #7a8a99; background: linear-gradient(180deg, #e6edf5, #b8cfe5); }
.jc-arrow::after { content: ""; position: absolute; left: 7px; top: 14px; border-left: 7.5px solid transparent; border-right: 7.5px solid transparent; border-top: 8px solid #333; }
.jform > :nth-child(10), .jform > :nth-child(11) { margin-top: 1px; }
.jtable { margin-top: 24px; width: 546px; height: 373px; display: flex; border: 1px solid #7a8a99; border-bottom-width: 2px; background: #fff; }
.jtable-main { width: 521px; flex: none; }
.jhdr { height: 34px; display: grid; grid-template-columns: 104px 105px 103px 105px 104px; background: #fff; font-size: 18px; }
.jhdr span { height: 30px; background: #eee; border-bottom: 1px solid #7a8a99; border-right: 1px solid #a9b5c0; border-top: 1px solid #fff; display: flex; align-items: center; justify-content: center; white-space: nowrap; overflow: hidden; padding-top: 7px; }
.jhdr span:first-child { padding-left: 8px; }
.jgrid { width: 521px; table-layout: fixed; border-collapse: separate; border-spacing: 0; font-size: 18.1px; }
.c-1 { width: 104px; }
.c-2 { width: 105px; }
.c-3 { width: 103px; }
.c-4 { width: 105px; }
.c-5 { width: 104px; }
.jgrid td { height: 24px; padding: 5px 0 0 3px; line-height: 18px; border-bottom: 1px solid #7a8a99; border-right: 1px solid #7a8a99; white-space: nowrap; overflow: hidden; color: #333; }
.jgrid tr td:nth-child(1), .jgrid tr td:nth-child(2) { border-right-width: 2px; }
.jsb { flex: 1; display: flex; flex-direction: column; background: #fff; padding-top: 34px; }
.jsb-btn { flex: none; display: flex; align-items: center; justify-content: center; background: linear-gradient(180deg, #f6f6f6, #e9e9e9); }
.up { height: 20px; border-bottom: 2px solid #7a8a99; }
.down { height: 23px; border-top: 2px solid #7a8a99; }
.tri-up { border-left: 7px solid transparent; border-right: 7px solid transparent; border-bottom: 6px solid #333; }
.tri-down { border-left: 7px solid transparent; border-right: 7px solid transparent; border-top: 6px solid #333; }
.jsb-gap { height: 82px; flex: none; background: #eee; }
.jsb-thumb { height: 198px; flex: none; display: flex; align-items: center; justify-content: center; border: 1px solid #6382bf; border-left-width: 2px; background: linear-gradient(90deg, #b8cfe5, #eef4fa 55%, #c5d8ea); }
.jsb-thumb i { width: 14px; height: 9px; border-top: 1px solid #6382bf; border-bottom: 1px solid #6382bf; background: linear-gradient(#6382bf, #6382bf) center / 100% 1px no-repeat; }
.jsb-rest { flex: 1; background: #eee; }

/* Message */
.msg { position: absolute; left: 763px; top: 410px; width: 394px; height: 178px; border: 1px solid #a4a4a4; border-radius: 11px; overflow: hidden; background: #eee; box-shadow: 0 12px 55px 6px rgba(0, 0, 0, .38); font-family: "Liberation Sans", Arial, sans-serif; color: #333; }
.msg-title { height: 43px; background: #f1f2f5; display: flex; align-items: center; justify-content: space-between; padding: 0 17px 2px 11px; font-family: "Noto Sans", sans-serif; font-size: 17px; color: #222; }
.msg-x { width: 16px; height: 16px; fill: none; stroke: #222; stroke-width: 1.2; margin-top: 2px; }
.msg-body { display: flex; flex-direction: column; align-items: center; padding-top: 15px; }
.msg-row { width: 100%; height: 46px; padding-left: 16px; display: flex; align-items: flex-start; }
.msg-ic { width: 40px; height: 44px; flex: none; }
.msg-text { margin-left: 29px; margin-top: 16px; font-weight: 700; font-size: 18px; line-height: 20px; }
.msg-ok { margin-top: 15px; width: 59px; height: 39px; padding: 0; border: 2px solid #7a8a99; box-shadow: inset 0 0 0 1px #dfe8f1; background: linear-gradient(180deg, #fff 0, #e9f0f7 35%, #b8cfe5 100%); font-family: "Liberation Sans", Arial, sans-serif; font-weight: 700; font-size: 18.5px; color: #333; display: flex; align-items: center; justify-content: center; }
.msg-ok span { width: 29px; height: 27px; border: 1px solid #a3bcd3; line-height: 28px; display: block; }
```
